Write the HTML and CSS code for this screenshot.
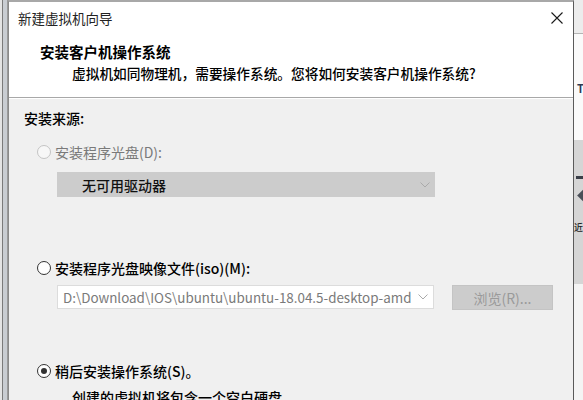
FILE: index.html
```html
<!DOCTYPE html>
<html lang="zh-CN">
<head>
    <meta charset="UTF-8">
    <meta name="viewport" content="width=device-width, initial-scale=1.0">
    <title>新建虚拟机向导</title>
    <link rel="stylesheet" href="styles.css">
</head>
<body>
    <div class="screen">
        <div class="edge-left"></div>
        <div class="dialog">
            <div class="titlebar">
                <span class="title">新建虚拟机向导</span>
                <svg class="close" width="12" height="12" viewBox="0 0 12 12">
                    <path d="M0.5 0.5 L11.5 11.5 M11.5 0.5 L0.5 11.5" stroke="#1a1a1a" stroke-width="1.1" fill="none"/>
                </svg>
            </div>
            <div class="header">
                <div class="header-title">安装客户机操作系统</div>
                <div class="header-sub">虚拟机如同物理机，需要操作系统。您将如何安装客户机操作系统?</div>
            </div>
            <div class="body">
                <div class="label">安装来源:</div>

                <div class="option disabled"><span class="radio"></span>安装程序光盘(D):</div>
                <div class="select disabled">
                    <span>无可用驱动器</span>
                    <svg class="chevron" width="10" height="6" viewBox="0 0 10 6">
                        <path d="M0.5 0.5 L5 5 L9.5 0.5" stroke="#aaa" stroke-width="1" fill="none"/>
                    </svg>
                </div>

                <div class="option option-iso"><span class="radio"></span>安装程序光盘映像文件(iso)(M):</div>
                <div class="file-row">
                    <div class="combo">
                        <span>D:\Download\IOS\ubuntu\ubuntu-18.04.5-desktop-amd</span>
                        <svg class="chevron" width="10" height="6" viewBox="0 0 10 6">
                            <path d="M0.5 0.5 L5 5 L9.5 0.5" stroke="#aaa" stroke-width="1" fill="none"/>
                        </svg>
                    </div>
                    <div class="button">浏览(R)...</div>
                </div>

                <div class="option option-later"><span class="radio checked"></span>稍后安装操作系统(S)。</div>
                <div class="note">创建的虚拟机将包含一个空白硬盘。</div>
            </div>
        </div>
        <div class="edge-right">
            <div class="bg-top"></div>
            <div class="bg-white"><span class="glyph-t">T</span></div>
            <div class="bg-gray">
                <span class="mark-bar"></span>
                <span class="mark-diamond"></span>
                <span class="glyph-jin">近</span>
            </div>
            <div class="bg-light"></div>
        </div>
    </div>
</body>
</html>
```

FILE: styles.css
```css
body {
    margin: 0;
    overflow: hidden;
    font-family: "Noto Sans CJK SC", "Noto Sans", sans-serif;
    font-size: 14px;
    font-weight: 500;
    color: #000;
}
.screen {
    display: flex;
    width: 583px;
    height: 400px;
    overflow: hidden;
}
.edge-left {
    width: 8px;
    flex: none;
    background: linear-gradient(to right, #e4e4e4 0, #e4e4e4 2px, #7a7a7a 2px, #7a7a7a 3px, #c9cdd2 3px, #c9cdd2 7px, #9a9a9a 7px);
}
.dialog {
    width: 564px;
    flex: none;
    border-left: 1px solid #8a8a8a;
    border-right: 1px solid #5a5a5a;
    border-top: 2px solid #a8a8a8;
    display: flex;
    flex-direction: column;
    background: #f0f0f0;
}
.titlebar {
    flex: none;
    height: 31px;
    background: #fff;
    display: flex;
    align-items: center;
    justify-content: space-between;
    padding: 0 10px 0 9px;
}
.title {
    font-size: 13.5px;
    font-weight: 400;
    color: #222;
}
.close {
    display: block;
}
.header {
    flex: none;
    height: 65px;
    box-sizing: border-box;
    background: #fff;
    border-bottom: 1px solid #a8a8a8;
    padding: 9px 0 0 31px;
}
.header-title {
    font-weight: bold;
    font-size: 14.5px;
    line-height: 20px;
}
.header-sub {
    margin: 1px 0 0 32px;
    font-size: 13.7px;
    line-height: 20px;
}
.body {
    flex: 1;
    min-height: 0;
    overflow: hidden;
    border-top: 1px solid #fff;
    padding: 9px 0 0 15px;
}
.label {
    line-height: 20px;
}
.option {
    display: flex;
    align-items: center;
    line-height: 20px;
    margin: 14px 0 0 13px;
}
.option-iso {
    margin-top: 61px;
}
.option-later {
    margin-top: 51px;
}
.option.disabled {
    color: #7a7a7a;
    font-weight: 400;
}
.radio {
    width: 12px;
    height: 12px;
    border: 1px solid #333;
    border-radius: 50%;
    background: #fff;
    margin-right: 4px;
    box-sizing: content-box;
    display: flex;
    align-items: center;
    justify-content: center;
}
.disabled .radio {
    border-color: #c4c4c4;
    background: #f7f7f7;
}
.radio.checked::after {
    content: "";
    width: 6px;
    height: 6px;
    border-radius: 50%;
    background: #333;
}
.select {
    display: flex;
    align-items: center;
    justify-content: space-between;
    width: 378px;
    height: 25px;
    box-sizing: border-box;
    margin: 10px 0 0 33px;
    padding: 0 5px 0 25px;
    background: #cccccc;
    color: #111;
}
.file-row {
    display: flex;
    margin: 7px 0 0 33px;
    gap: 18px;
}
.combo {
    display: flex;
    align-items: center;
    justify-content: space-between;
    width: 377px;
    height: 24px;
    box-sizing: border-box;
    padding: 0 5px 0 5px;
    background: #fff;
    border: 1px solid #dcdcdc;
    color: #7a7a7a;
    font-size: 13.4px;
    font-weight: 400;
    white-space: nowrap;
    overflow: hidden;
}
.button {
    width: 101px;
    height: 25px;
    box-sizing: border-box;
    display: flex;
    align-items: center;
    justify-content: center;
    background: #cccccc;
    border: 1px solid #c4c4c4;
    color: #9a9a9a;
    font-weight: 400;
}
.note {
    margin: 6px 0 0 48px;
    line-height: 20px;
}
.edge-right {
    flex: 1;
    display: flex;
    flex-direction: column;
    overflow: hidden;
}
.bg-top {
    flex: none;
    height: 33px;
    background: #ececec;
    border-bottom: 1px solid #b4b4b4;
}
.bg-white {
    flex: none;
    height: 106px;
    background: #fafafa;
    padding: 48px 0 0 3px;
    box-sizing: border-box;
}
.glyph-t {
    display: block;
    font-size: 11px;
    font-weight: bold;
    color: #2c3a55;
    line-height: 12px;
}
.bg-gray {
    flex: none;
    height: 144px;
    background: #d5d5d5;
    padding: 36px 0 0 2px;
    box-sizing: border-box;
    display: flex;
    flex-direction: column;
}
.mark-bar {
    width: 9px;
    height: 3px;
    background: #3a3f48;
}
.mark-diamond {
    width: 9px;
    height: 9px;
    margin: 12px 0 0 3px;
    background: #4a4f58;
    transform: rotate(45deg);
}
.glyph-jin {
    font-size: 9px;
    line-height: 12px;
    margin: 22px 0 0 -2px;
    color: #222;
}
.bg-light {
    flex: 1;
    background: #f4f4f4;
}
```
